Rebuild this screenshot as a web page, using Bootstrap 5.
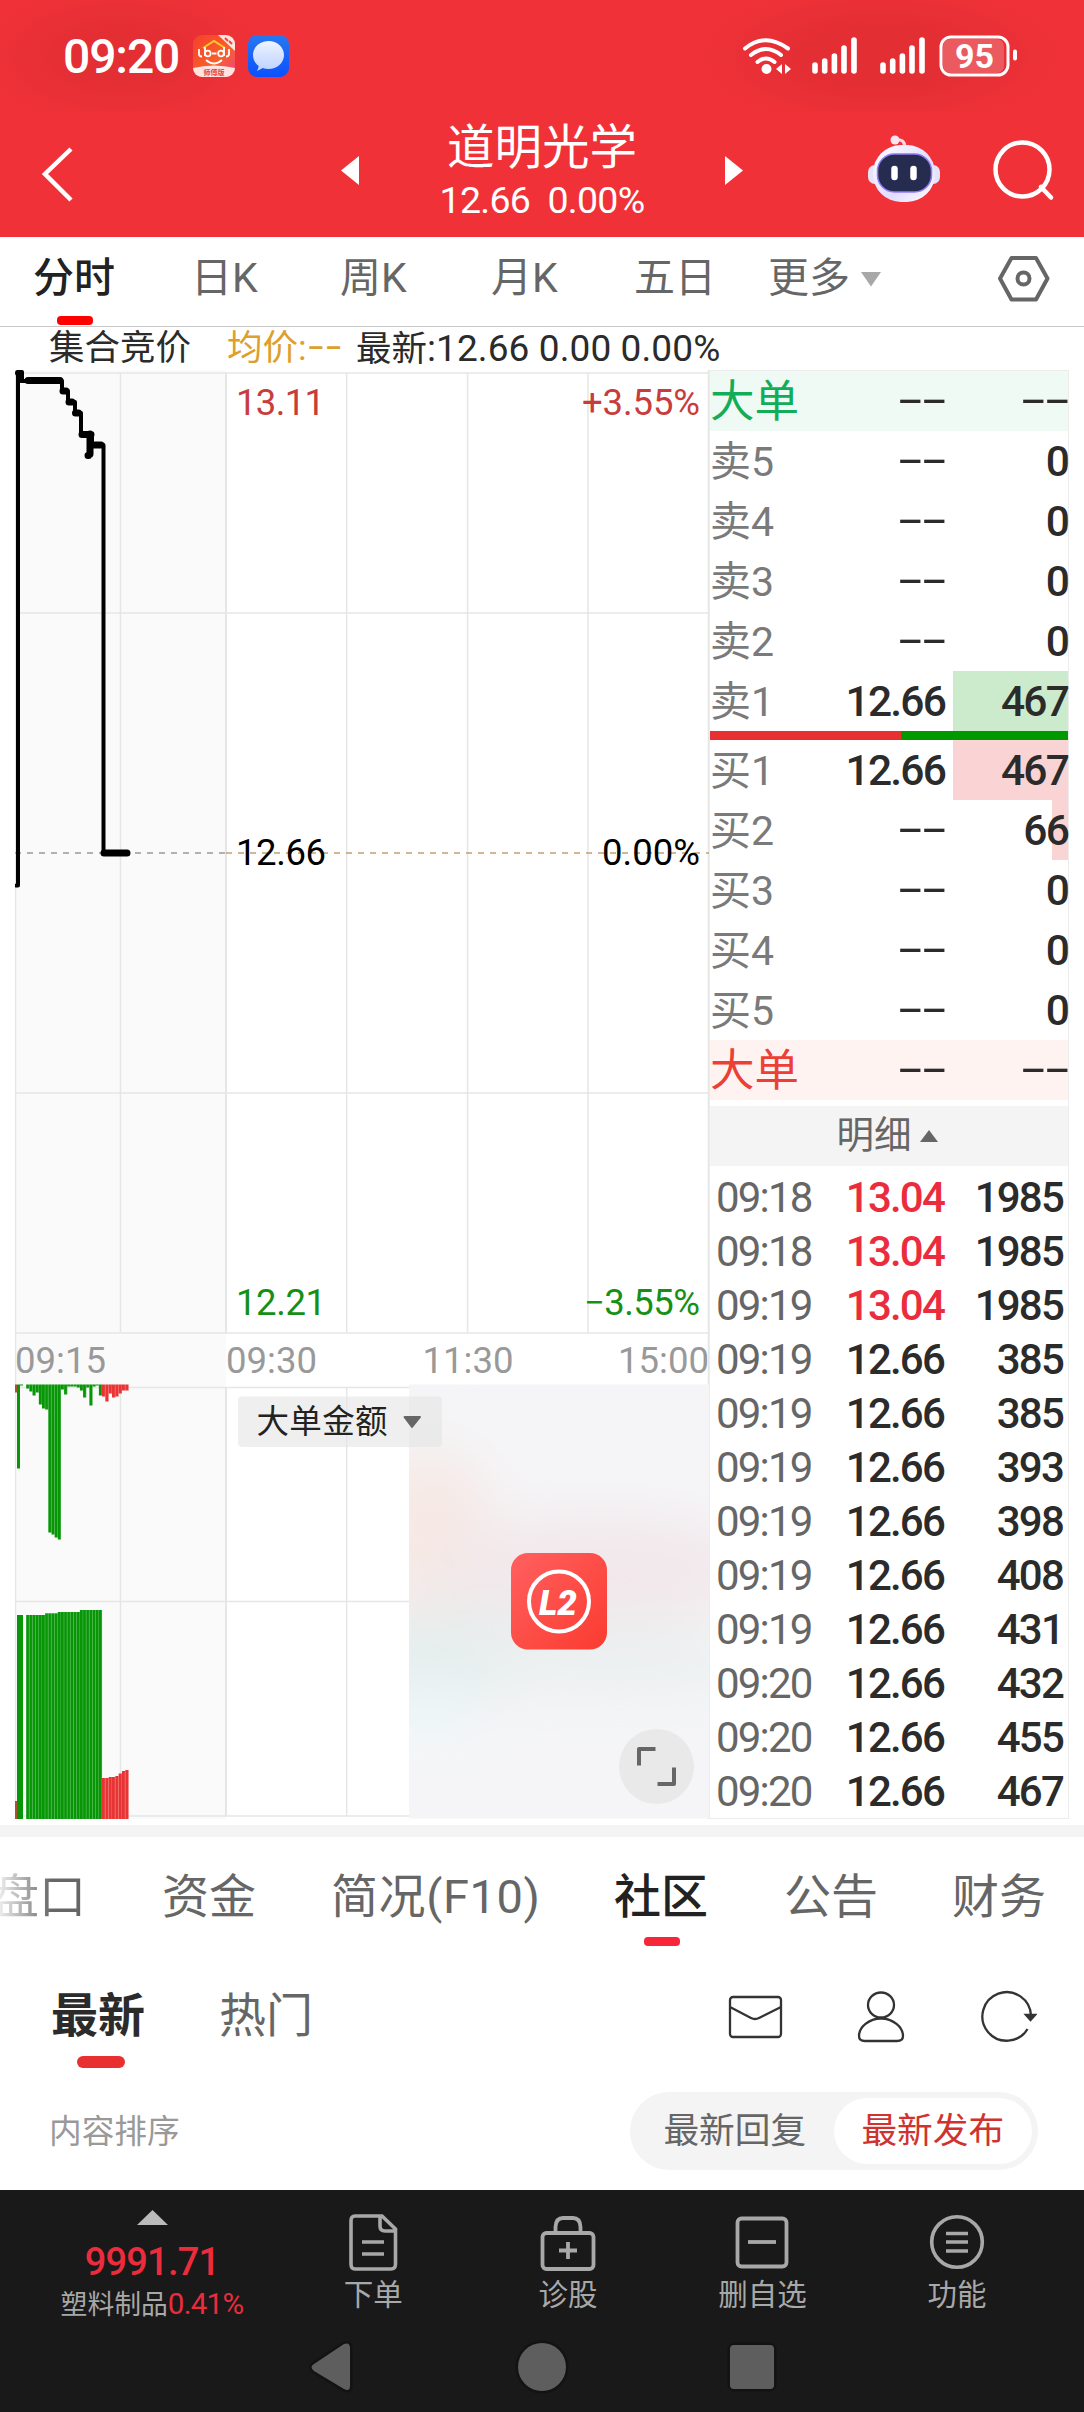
<!DOCTYPE html>
<html lang="zh-CN">
<head>
<meta charset="utf-8">
<meta name="viewport" content="width=device-width, initial-scale=1">
<title>道明光学</title>
<link href="https://cdn.jsdelivr.net/npm/bootstrap@5.3.0/dist/css/bootstrap.min.css" rel="stylesheet">
<style>
body{width:1084px;height:2412px;overflow:hidden;background:#fff;color:#2b2b2b;font-family:Roboto,"Noto Sans CJK SC",sans-serif;line-height:1}
svg{display:block;flex:none}
.top-area{height:237px;background:#f03238;color:#fff}
.status{height:112px;padding:0 67px 0 63px;background:radial-gradient(ellipse 150px 75px at 120px 56px,#e32e34 30%,#e32e3400),radial-gradient(ellipse 190px 75px at 880px 56px,#e32e34 40%,#e32e3400)}
.clock{font-size:48px;font-weight:500;letter-spacing:-1.1px;width:130px;padding-top:2px}
.titlebar{height:125px;padding:0 29px 0 41px}
.stock{width:366px}
.stock-name{font-size:47.5px;line-height:56px;margin-top:8px}
.stock-sub{font-size:37.5px;line-height:40px;letter-spacing:-.7px;white-space:pre;margin-top:4px}
.period{height:90px;border-bottom:1px solid #c8c8c8;color:#666;font-size:41px}
.period>span{line-height:83px;flex:none}
.tab-on{position:relative;color:#222;font-weight:500}
.tab-on::after{content:"";position:absolute;left:50%;transform:translateX(-50%);background:#f00;border-radius:4px;width:36px;height:9px}
.p-on::after{top:79px}
.quote-info{height:43px;padding-left:49px;font-size:35.5px;line-height:43px;color:#2b2b2b}
.num-wide{font-size:37px;letter-spacing:.1px}
.main-area{height:1455px;padding-left:15px}
.chart{width:694px}
.side{width:360px;border:1px solid #ececec}
.lv{height:60px;line-height:62px;color:#2b2b2b;font-size:42.5px;font-weight:500;letter-spacing:-1.8px}
.lv>.nm{width:120px;padding-left:0;font-weight:400;color:#7a7a7a;font-size:41px;letter-spacing:0}
.lv>.pr{width:115px;text-align:right}
.lv>.vo{flex:1;text-align:right;padding-right:0}
.lv.big>.nm{font-size:44.5px}
.dd{display:inline-block;font-family:"Liberation Sans",sans-serif;font-weight:400;letter-spacing:-.043em;transform:translateY(-3px) scaleX(1.95);transform-origin:right center}
.dd-s{display:inline-block;font-family:"Liberation Sans",sans-serif;letter-spacing:0;transform:translateY(-3px) scaleX(1.5);transform-origin:left center}
.ratio-bar{height:9px}
.detail{height:60px;margin-top:6px;background:#f4f4f4;color:#666;font-size:37.5px;padding-right:4px}
.tick{height:54px;line-height:58px;font-size:42px;font-weight:500;letter-spacing:-1.8px;padding:0 5px 0 6px;color:#2b2b2b}
.tick>.tm{width:112px;font-weight:400;color:#666;letter-spacing:-1.8px}
.tick>.pr{width:116px;text-align:right}
.tick>.vo{flex:1;text-align:right}
.rise{color:#eb2c3c}
.band{height:12px;background:#f4f4f4}
.section-tabs{height:120px;font-size:47px;color:#666}
.section-tabs>span{flex:none;line-height:119px}
.s-on::after{top:100px;background:#f8263a}
.fade-l{background:linear-gradient(90deg,#fff 0,#666 60px);-webkit-background-clip:text;color:transparent}
.sub-tabs{height:130px;font-size:47px;color:#666;padding:0 47px 0 51px}
.sub-tabs>span{line-height:117px;flex:none}
.n-on{font-weight:700;color:#2b2b2b}
.n-on::after{top:99px;background:#e83030;width:48px;height:12px;border-radius:6px;margin-left:3px}
.sort{height:103px;padding:5px 46px 20px 49px;font-size:32.7px;color:#999}
.sort>span{padding-top:2px}
.seg{width:408px;height:78px;border-radius:39px;background:#f4f4f4;color:#666;font-size:35.7px;padding:6px}
.seg>span{width:198px;height:66px;line-height:67px;text-align:center;border-radius:33px}
.seg>.sel{background:#fff;color:#d0332f;width:199px}
.dock{height:135px;background:#191919;color:#a8a8a8;font-size:29.5px}
.dock>div{flex:none;width:194.6px}
.dock .idx{width:304px}
.dock-name{margin-top:1px;line-height:36px}
.sysnav{height:87px;background:#191919}
</style>
<script src="https://cdn.jsdelivr.net/npm/bootstrap@5.3.0/dist/js/bootstrap.bundle.min.js"></script>
</head>
<body class="d-flex flex-column">
<header class="top-area flex-shrink-0">
  <div class="status d-flex align-items-center">
    <span class="clock">09:20</span>
    <svg width="96" height="42" viewBox="0 0 96 42">
      <defs><linearGradient id="g1" x1="0" y1="0" x2="1" y2="1"><stop offset="0" stop-color="#f4402c"/><stop offset=".6" stop-color="#f8602a"/><stop offset="1" stop-color="#f0408c"/></linearGradient>
      <linearGradient id="g2" x1="0" y1="0" x2="0" y2="1"><stop offset="0" stop-color="#2878f0"/><stop offset="1" stop-color="#0b50ff"/></linearGradient>
      <linearGradient id="g3" x1="0" y1="0" x2="0" y2="1"><stop offset="0" stop-color="#eef3ff"/><stop offset="1" stop-color="#bcd2ff"/></linearGradient>
      <clipPath id="c1"><rect width="42" height="42" rx="9"/></clipPath></defs>
      <g clip-path="url(#c1)"><rect width="42" height="42" fill="url(#g1)"/><path d="M0 33Q21 28 42 33V42H0Z" fill="#ffe4e0"/><path d="M25 0H42V16Z" fill="#ffe4e0"/>
      <path d="M10 13 21 6 32 13" fill="none" stroke="#ffc52e" stroke-width="2"/><path d="M32 3l3 3M36 6l3 3" stroke="#e84838" stroke-width="2"/>
      <g fill="none" stroke="#fff" stroke-width="1.800"><path d="M6 14v5q0 2.500 3 2.500M12 12v9M31 12v9M36 14v5q0 2.500-3 2.500M19 18.500h4.500M13 25q8 7 16 0"/><circle cx="14.800" cy="18.500" r="2.800"/><circle cx="28" cy="18.500" r="2.800"/></g>
      <text x="10.500" y="40" font-size="7" font-weight="700" fill="#e84838">师傅版</text></g>
      <rect x="55" y="0" width="41" height="42" rx="9" fill="url(#g2)"/>
      <path d="M75.500 6C84 6 91 12 91 20s-7 14-15.500 14c-2 0-4-.3-5.700-.9L64 36c1-2 1.500-3.600 1.600-5.200C62 28.200 60 24.500 60 20 60 12 67 6 75.500 6Z" fill="url(#g3)"/>
    </svg>
    <svg class="ms-auto" width="275" height="42" viewBox="0 0 275 42" fill="none" stroke="#fff" stroke-linecap="round">
      <g stroke-width="4"><path d="M3 13.500Q23 -3 46 13.500M9 20q15-12 30 0M15.500 27q8.500-7 17 0"/></g>
      <circle cx="24.500" cy="34" r="5" fill="#fff" stroke="none"/><path d="M34 34l6-5v10ZM43 29l6 5-6 5Z" fill="#fff" stroke="none"/>
      <g stroke-width="5.600"><path d="M73 30v6M82.700 26v10M92.400 21v15M102 13v23M112 5v31M141 30v6M150.700 26v10M160.400 21v15M170 13v23M180 5v31"/></g>
      <rect x="199" y="2" width="67" height="38" rx="10" stroke-width="3"/><rect x="201" y="4" width="61" height="34" rx="7" fill="#ea5a5f" stroke="none"/><path d="M273 16.500v7" stroke-width="4"/>
      <text x="232.500" y="33" text-anchor="middle" font-size="34" font-weight="700" fill="#fff" stroke="none">95</text>
    </svg>
  </div>
  <div class="titlebar d-flex align-items-start">
    <svg width="34" height="125" viewBox="0 0 34 125"><path d="M30 37 4 62l26 26" fill="none" stroke="#fff" stroke-width="4.500"/></svg>
    <svg style="margin-left:266px" width="18" height="125" viewBox="0 0 18 125"><path d="M18 44v29L0 58.500Z" fill="#fff"/></svg>
    <div class="stock text-center d-flex flex-column"><div class="stock-name">道明光学</div><div class="stock-sub">12.66  0.00%</div></div>
    <svg width="18" height="125" viewBox="0 0 18 125"><path d="M0 44v29l18-14.500Z" fill="#fff"/></svg>
    <svg class="ms-auto" width="74" height="125" viewBox="0 0 74 125">
      <defs><linearGradient id="rb" x1="0" y1="0" x2="1" y2="1"><stop offset="0" stop-color="#fff"/><stop offset=".6" stop-color="#e2dcff"/><stop offset="1" stop-color="#fff"/></linearGradient></defs>
      <path d="M28 28q10-2 10 8" fill="none" stroke="#f3d9e8" stroke-width="3"/><circle cx="28" cy="28" r="4.500" fill="#f7e4ee"/>
      <rect x="1" y="53" width="72" height="19" rx="7" fill="#e6e2fa"/><rect x="6" y="33" width="62" height="57" rx="28" fill="url(#rb)"/>
      <rect x="10.500" y="42" width="54" height="38" rx="17" fill="#262c50" stroke="#8f7cf0" stroke-width="1.500"/><path d="M27.500 57v8M46.500 57v8" stroke="#fff" stroke-width="6.500" stroke-linecap="round"/>
    </svg>
    <svg style="margin-left:50px" width="64" height="125" viewBox="0 0 64 125" fill="none" stroke="#fff" stroke-width="4.500"><circle cx="31.500" cy="57.500" r="27"/><path d="m50 75 10 10.500" stroke-linecap="round"/></svg>
  </div>
</header>

<nav class="period d-flex flex-shrink-0 align-items-start">
  <span class="tab-on p-on" style="margin-left:33px;width:84px">分时</span>
  <span style="margin-left:74px;width:149px">日K</span><span style="width:151px">周K</span><span style="width:143px">月K</span><span style="width:134px">五日</span><span style="width:93px">更多</span>
  <svg width="20" height="89" viewBox="0 0 20 89"><path d="M0 35h20L10 49.500Z" fill="#a8a8a8"/></svg>
  <svg style="margin-left:115px" width="54" height="89" viewBox="0 0 54 89" fill="none" stroke="#666" stroke-width="4" stroke-linejoin="round"><path d="M15.500 21H40L51.500 41.500 40 62.500H15.500L4 41.500Z"/><circle cx="27.500" cy="41.500" r="6"/></svg>
</nav>
<div class="quote-info d-flex flex-shrink-0"><span style="width:178px">集合竞价</span><span style="width:129px;color:#dda02c">均价:<span class="dd-s">--</span></span><span>最新<span class="num-wide">:12.66 0.00 0.00%</span></span></div>

<main class="main-area d-flex flex-shrink-0">
  <div class="chart">
    <svg id="chart" width="694" height="1455" viewBox="15 370 694 1455" font-family="Roboto, Noto Sans CJK SC, sans-serif" font-size="36.500">
      <defs>
        <filter id="soft" x="-60%" y="-60%" width="220%" height="220%"><feGaussianBlur stdDeviation="28"/></filter>
        <clipPath id="hz"><rect x="409" y="1384.500" width="300" height="434"/></clipPath>
        <linearGradient id="l2" x1="0" y1="0" x2="1" y2="1"><stop offset="0" stop-color="#ff6060"/><stop offset="1" stop-color="#fb3b30"/></linearGradient>
      </defs>
      <rect x="15" y="370" width="211" height="1449" fill="#fafafa"/>
      <g fill="none" stroke="#e6e6e6" stroke-width="1.500"><path d="M15.500 370V1819M120.500 373V1333M346.700 373V1333M467.600 373V1333M588 373V1333M708.500 370V1819M15 373H709M15 613H709M15 1093H709M15 1333H709M120.500 1388V1816M346.700 1388V1816M15 1387.500H709M15 1601.500H709M15 1816H709"/><path d="M226 373V1333M226 1388V1816" stroke-width="2"/></g>
      <path d="M15 853H226" stroke="#999" stroke-width="1.500" stroke-dasharray="6 6"/><path d="M226 853H709" stroke="#c0a170" stroke-width="1.500" stroke-dasharray="6 6"/>
      <g fill="none" stroke="#000" stroke-linejoin="round" stroke-linecap="round">
        <path stroke-width="4" d="M16 885.500H18V372H22V381H62V391H68V402H75V413H81V434H92V445H103.500V853"/>
        <path stroke-width="7" d="M28 380.500H60M63 391H66M69 402H72M75.500 413H78.500M82 434.500H91M90 434V454M88 455.500H88.500M95 445H101M104 853H127"/><path stroke-width="6" d="M18 373H20V380"/>
      </g>
      <g id="bars"></g>
      <g clip-path="url(#hz)"><rect x="409" y="1384" width="300" height="435" fill="#f5f5f7"/><g filter="url(#soft)"><ellipse cx="430" cy="1530" rx="60" ry="80" fill="#f6e8e4"/><ellipse cx="600" cy="1570" rx="160" ry="55" fill="#f2e8eb"/><ellipse cx="440" cy="1655" rx="110" ry="50" fill="#e6eded"/><ellipse cx="620" cy="1660" rx="140" ry="35" fill="#ebf0f0"/><ellipse cx="430" cy="1710" rx="50" ry="25" fill="#ecf8f8"/></g></g>
      <g><rect x="238" y="1396.500" width="204" height="50.500" rx="4" fill="#e4e4e4" fill-opacity=".6"/><text x="256.500" y="1433" font-size="32.500" fill="#222" textLength="131">大单金额</text><path d="M404.500 1417h15.500L412 1427Z" fill="#666" stroke="#666" stroke-width="2" stroke-linejoin="round"/></g>
      <rect x="511" y="1553" width="96" height="96.500" rx="17" fill="url(#l2)"/><circle cx="559" cy="1601.500" r="30" fill="none" stroke="#fff" stroke-width="4"/><text x="558" y="1614.500" text-anchor="middle" font-size="35" font-weight="900" font-style="italic" fill="#fff" textLength="38" lengthAdjust="spacingAndGlyphs">L2</text>
      <circle cx="656.500" cy="1766.500" r="37.500" fill="#e9e9e9"/><path d="M639 1765.500V1749H655.500M657.500 1784H674V1767.500" fill="none" stroke="#666" stroke-width="4" stroke-linejoin="round"/>
      <g id="labels">
        <text x="236" y="415" fill="#c83c3c" textLength="89">13.11</text><text x="700" y="415" text-anchor="end" fill="#c83c3c" textLength="118">+3.55%</text>
        <text x="236" y="865" fill="#000" textLength="90">12.66</text><text x="700" y="865" text-anchor="end" fill="#000" textLength="98">0.00%</text>
        <text x="236" y="1315" fill="#159015" textLength="90">12.21</text><text x="700" y="1315" text-anchor="end" fill="#159015" textLength="116">−3.55%</text>
        <g fill="#999"><text x="15" y="1372.500" textLength="91">09:15</text><text x="226" y="1372.500" textLength="91">09:30</text><text x="468" y="1372.500" text-anchor="middle" textLength="91">11:30</text><text x="709" y="1372.500" text-anchor="end" textLength="91">15:00</text></g>
      </g>
    </svg>
  </div>
  <aside class="side" id="side" style="height:1449px"></aside>
</main>
<div class="band flex-shrink-0"></div>
<nav class="section-tabs d-flex flex-shrink-0">
  <span class="fade-l" style="margin-left:-8px;width:170px">盘口</span><span style="width:169px">资金</span><span style="width:283px;letter-spacing:.6px">简况(F10)</span><span class="tab-on s-on" style="width:95px">社区</span><span style="margin-left:75px;width:168px">公告</span><span>财务</span>
</nav>
<div class="sub-tabs d-flex flex-shrink-0">
  <span class="tab-on n-on" style="width:94px">最新</span><span style="margin-left:74px">热门</span>
  <svg class="ms-auto" width="309" height="112" viewBox="728 1957 309 112" fill="none" stroke="#333" stroke-width="2.300">
    <rect x="730" y="1997" width="51" height="40" rx="3"/><path d="M730 2007 751 2018Q755 2020 759 2018L781 2007"/>
    <ellipse cx="881" cy="2005" rx="13" ry="12.500"/><path d="M881 2018.500C893 2018.500 903 2027 903 2036Q903 2041 897 2041H865Q859 2041 859 2036C859 2027 869 2018.500 881 2018.500Z"/>
    <path d="M1027.500 2029A24.300 24.300 0 1 1 1031 2016"/><path d="M1026 2015H1035L1030.500 2020Z" fill="#333"/>
  </svg>
</div>
<div class="sort d-flex flex-shrink-0 align-items-center justify-content-between"><span>内容排序</span><div class="seg d-flex"><span>最新回复</span><span class="sel">最新发布</span></div></div>

<footer class="dock d-flex flex-shrink-0">
  <div class="idx d-flex flex-column align-items-center"><svg style="margin-top:20px" width="31" height="15" viewBox="0 0 31 15"><path d="M15.500 0 31 15H0Z" fill="#bbb"/></svg>
    <div class="rise fw-medium" style="font-size:38px;line-height:44px;margin-top:15px;letter-spacing:-.8px">9991.71</div><div style="font-size:26.8px;line-height:40px;white-space:nowrap">塑料制品<span class="rise" style="font-size:29.5px;letter-spacing:-.7px">0.41%</span></div></div>
  <div class="d-flex flex-column align-items-center" style="margin-left:-28px"><svg width="62" height="86" viewBox="342 2190 62 86" fill="none" stroke="#a8a8a8" stroke-width="3.600"><path d="M355 2216H382L395.500 2229V2264Q395.500 2269 391 2269H355Q351 2269 351 2264V2221Q351 2216 355 2216ZM380 2217V2226Q380 2231 385 2231H395M362 2242H384M362 2254H384"/></svg><div class="dock-name">下单</div></div>
  <div class="d-flex flex-column align-items-center"><svg width="62" height="86" viewBox="537 2190 62 86" fill="none" stroke="#a8a8a8" stroke-width="3.800"><rect x="542.500" y="2233" width="51" height="36" rx="4"/><path d="M555.500 2232V2227Q556 2218 563 2218H573Q580 2218 580.500 2227V2232M568 2242V2259M559 2250.500H577"/></svg><div class="dock-name">诊股</div></div>
  <div class="d-flex flex-column align-items-center"><svg width="62" height="86" viewBox="731 2190 62 86" fill="none" stroke="#a8a8a8" stroke-width="3.800"><rect x="737.500" y="2218.500" width="49" height="48" rx="4"/><path d="M748 2242H776"/></svg><div class="dock-name">删自选</div></div>
  <div class="d-flex flex-column align-items-center"><svg width="62" height="86" viewBox="926 2190 62 86" fill="none" stroke="#a8a8a8" stroke-width="3.600"><circle cx="957" cy="2242" r="25.300"/><path d="M946 2233.500H968M946 2242H968M946 2251H968"/></svg><div class="dock-name">功能</div></div>
</footer>
<div class="sysnav flex-shrink-0"><svg width="1084" height="87" viewBox="0 2325 1084 87" fill="#5e5e5e" stroke="#131313" stroke-width="5" stroke-linejoin="round" paint-order="stroke"><path d="M314 2364 344 2344Q350 2342 350 2348V2386Q350 2392 344 2389L314 2371Q309 2367 314 2364Z"/><circle cx="542" cy="2367" r="24"/><rect x="730" y="2345" width="44" height="44" rx="4"/></svg></div>

<script>
const dd = '<span class="dd">--</span>';
let html = '';
const level = (n, p, v, cls = '', bg = '') => `<div class="lv d-flex ${cls}"${bg ? ` style="background:${bg}"` : ''}><span class="nm"${cls ? ` style="color:${n[1]}"` : ''}>${cls ? n[0] : n}</span><span class="pr">${p}</span><span class="vo">${v}</span></div>`;
const shade = (c, w) => `linear-gradient(${c},${c}) right / ${w}px 100% no-repeat`;
html += level(['大单', '#12ad58'], dd, dd, 'big', '#f0faf5');
for (const i of [5, 4, 3, 2]) html += level('卖' + i, dd, '0');
html += level('卖1', '12.66', '467', '', shade('#ccebcc', 115));
html += '<div class="ratio-bar d-flex"><div style="width:191px;background:#e83030"></div><div class="flex-fill" style="background:#009900"></div></div>';
html += level('买1', '12.66', '467', '', shade('#fad4d4', 115));
html += level('买2', dd, '66', '', shade('#fad4d4', 16));
for (const i of [3, 4, 5]) html += level('买' + i, dd, '0');
html += level(['大单', '#ec3f36'], dd, dd, 'big', '#fff3f2');
html += '<div class="detail d-flex align-items-center justify-content-center"><span>明细</span><svg class="ms-2" width="18" height="14" viewBox="0 0 18 14"><path d="M9 1 18 13H0Z" fill="#666"/></svg></div><div style="height:3px"></div>';
[['09:18','13.04',1985],['09:18','13.04',1985],['09:19','13.04',1985],['09:19','12.66',385],['09:19','12.66',385],['09:19','12.66',393],['09:19','12.66',398],['09:19','12.66',408],['09:19','12.66',431],['09:20','12.66',432],['09:20','12.66',455],['09:20','12.66',467]].forEach(t => {
  html += `<div class="tick d-flex"><span class="tm">${t[0]}</span><span class="pr ${t[1] === '13.04' ? 'rise' : ''}">${t[1]}</span><span class="vo">${t[2]}</span></div>`;
});
document.getElementById('side').innerHTML = html;

// Order-flow bars hang from the upper edge; matched volume bars stand on the lower edge.
const G = '#069606', R = '#e83434';
const down = [4,7,11,8,20,24,25,148,150,153,155,5,10,2,2,2,3,6,13,3,21,2,1,11,12,17,9,13,12,9,6,6];
let s = `<rect x="15" y="1384.500" width="2" height="8" fill="#b05030"/><rect x="17" y="1384.500" width="3" height="84" fill="${G}"/><rect x="20" y="1384.500" width="3" height="1" fill="${G}"/>`;
s += `<rect x="15" y="1801" width="2" height="18" fill="#b05030"/><rect x="17" y="1615" width="6" height="204" fill="${G}"/>`;
down.forEach((h, i) => {
  const green = i < 24, step = green ? 3.16 : 3.33, x = green ? 26.2 + i * step : 102 + (i - 24) * step, c = green ? G : R;
  const top = i < 6 ? 1615 : i < 10 ? 1613.3 : i < 17 ? 1612 : i < 24 ? 1610 : [1778,1778,1777,1777,1776,1773.5,1771,1770][i - 24];
  for (const [y, k] of [[1384.5, h], [top, 1819 - top]]) s += `<rect x="${x}" y="${y}" width="${step}" height="${k}" fill="${c}"/><rect x="${x + step - .6}" y="${y}" width=".6" height="${k}" fill="#fff" fill-opacity=".25"/>`;
});
document.getElementById('bars').innerHTML = s;
</script>
</body>
</html>
